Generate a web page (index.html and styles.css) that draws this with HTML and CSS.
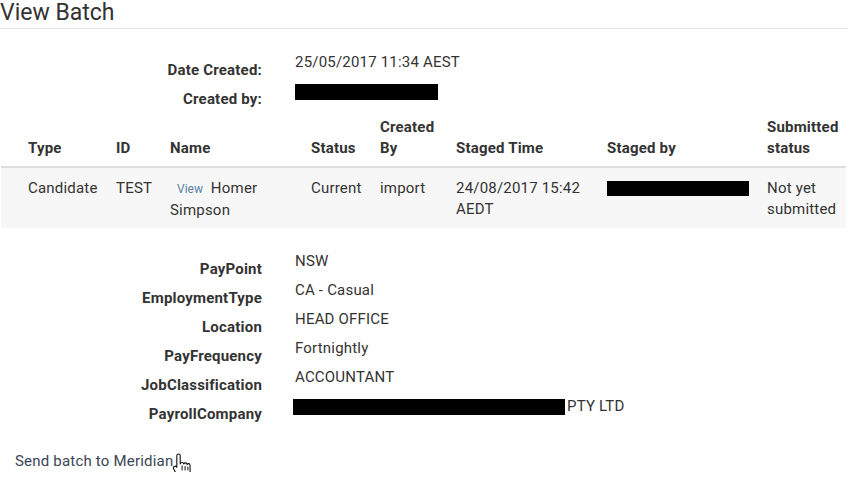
FILE: index.html
```html
<!DOCTYPE html>
<html lang="en">

<head>
    <meta charset="UTF-8">
    <meta name="viewport" content="width=device-width, initial-scale=1.0">
    <title>View Batch</title>
    <link rel="stylesheet" href="styles.css">
</head>

<body>
    <div class="page">
        <h1 class="page-title">View Batch</h1>
        <hr class="title-rule">

        <!-- Batch summary -->
        <dl class="info-list">
            <dt>Date Created:</dt>
            <dd>25/05/2017 11:34 AEST</dd>
            <dt>Created by:</dt>
            <dd><span class="redacted created-by"></span></dd>
        </dl>

        <!-- Batch items -->
        <table class="batch-table">
            <colgroup>
                <col class="col-type">
                <col class="col-id">
                <col class="col-name">
                <col class="col-status">
                <col class="col-created">
                <col class="col-staged-time">
                <col class="col-staged-by">
                <col class="col-submitted">
            </colgroup>
            <thead>
                <tr>
                    <th>Type</th>
                    <th>ID</th>
                    <th>Name</th>
                    <th>Status</th>
                    <th>Created By</th>
                    <th>Staged Time</th>
                    <th>Staged by</th>
                    <th>Submitted status</th>
                </tr>
            </thead>
            <tbody>
                <tr>
                    <td>Candidate</td>
                    <td>TEST</td>
                    <td><a href="#" class="view-link">View</a> Homer Simpson</td>
                    <td>Current</td>
                    <td>import</td>
                    <td>24/08/2017 15:42 AEDT</td>
                    <td><span class="redacted staged-by"></span></td>
                    <td>Not yet submitted</td>
                </tr>
            </tbody>
        </table>

        <!-- Employment details -->
        <dl class="info-list details">
            <dt>PayPoint</dt>
            <dd>NSW</dd>
            <dt>EmploymentType</dt>
            <dd>CA - Casual</dd>
            <dt>Location</dt>
            <dd>HEAD OFFICE</dd>
            <dt>PayFrequency</dt>
            <dd>Fortnightly</dd>
            <dt>JobClassification</dt>
            <dd>ACCOUNTANT</dd>
            <dt>PayrollCompany</dt>
            <dd><span class="redacted company"></span>PTY LTD</dd>
        </dl>

        <p class="actions">
            <span class="send-wrap">
                <a href="#" class="send-link">Send batch to Meridian</a>
                <svg class="cursor" width="20" height="31" viewBox="0 0 20 30">
                    <path d="M6.5 2.5c1 0 1.7.7 1.7 1.7v8.2c.3-.9 1-1.4 1.8-1.4 1 0 1.6.6 1.7 1.4.3-.6.9-1 1.6-1 1 0 1.6.7 1.7 1.5.3-.5.8-.8 1.4-.8 1 0 1.7.8 1.7 1.8v5.6c0 4.3-2.6 7.2-6.4 7.2H10c-2.4 0-3.7-1-5-3L1.7 17.4c-.5-.9-.3-1.9.5-2.4.8-.5 1.8-.3 2.4.5l.2.3V4.2c0-1 .7-1.7 1.7-1.7z" fill="#fff" stroke="#111" stroke-width="1.1" stroke-linejoin="round"/>
                    <path d="M10.1 14.5v4M13.1 15v3.5M15.9 15.5v3" stroke="#111" stroke-width="1" stroke-linecap="round"/>
                </svg>
            </span>
        </p>
    </div>
</body>

</html>
```

FILE: styles.css
```css
body {
    margin: 0;
    font-family: Roboto, "Liberation Sans", Arial, sans-serif;
    font-size: 15px;
    letter-spacing: 0.2px;
    color: #333;
    background: #fff;
}

.page {
    width: 848px;
}

.page-title {
    margin: 0;
    font-size: 23px;
    font-weight: 400;
    line-height: 26px;
    letter-spacing: 0;
    color: #333;
}

.title-rule {
    margin: 2px 0 0;
    border: none;
    border-top: 1px solid #e3e3e3;
}

/* label / value lists */
.info-list {
    display: grid;
    grid-template-columns: 262px 1fr;
    column-gap: 33px;
    margin: 23px 0 0;
    line-height: 21px;
}

.info-list dt {
    padding-top: 8px;
    text-align: right;
    font-weight: bold;
}

.info-list dd {
    margin: 0;
}

.info-list.details {
    margin-top: 23px;
}

.redacted {
    display: inline-block;
    height: 16px;
    background: #000;
    vertical-align: middle;
}

.created-by {
    width: 143px;
}

.staged-by {
    width: 142px;
    height: 15px;
    margin-top: 3px;
    vertical-align: top;
}

.company {
    width: 272px;
    margin-left: -2px;
    margin-right: 2px;
}

/* batch table */
.batch-table {
    width: 845px;
    margin-left: 1px;
    border-collapse: collapse;
    table-layout: fixed;
    line-height: 21px;
}

.col-type { width: 107px; }
.col-id { width: 54px; }
.col-name { width: 141px; }
.col-status { width: 69px; }
.col-created { width: 76px; }
.col-staged-time { width: 151px; }
.col-staged-by { width: 160px; }
.col-submitted { width: 87px; }

.batch-table th {
    padding: 7px 8px 7px;
    text-align: left;
    vertical-align: bottom;
    font-weight: bold;
    border-bottom: 2px solid #ddd;
}

.batch-table td {
    padding: 10px 8px 7px;
    vertical-align: top;
    background: #f7f7f7;
}

.batch-table th:first-child,
.batch-table td:first-child {
    padding-left: 27px;
}

.batch-table th:last-child,
.batch-table td:last-child {
    padding-right: 2px;
}

.view-link {
    margin-left: 7px;
    margin-right: 4px;
    font-size: 12px;
    letter-spacing: 0;
    color: #5b7fa6;
    text-decoration: none;
}

/* actions */
.actions {
    margin: 26px 0 0 15px;
    line-height: 21px;
}

.send-wrap {
    position: relative;
}

.send-link {
    color: #3a4556;
    text-decoration: none;
}

.cursor {
    position: absolute;
    left: calc(100% - 1px);
    top: -1px;
}
```
